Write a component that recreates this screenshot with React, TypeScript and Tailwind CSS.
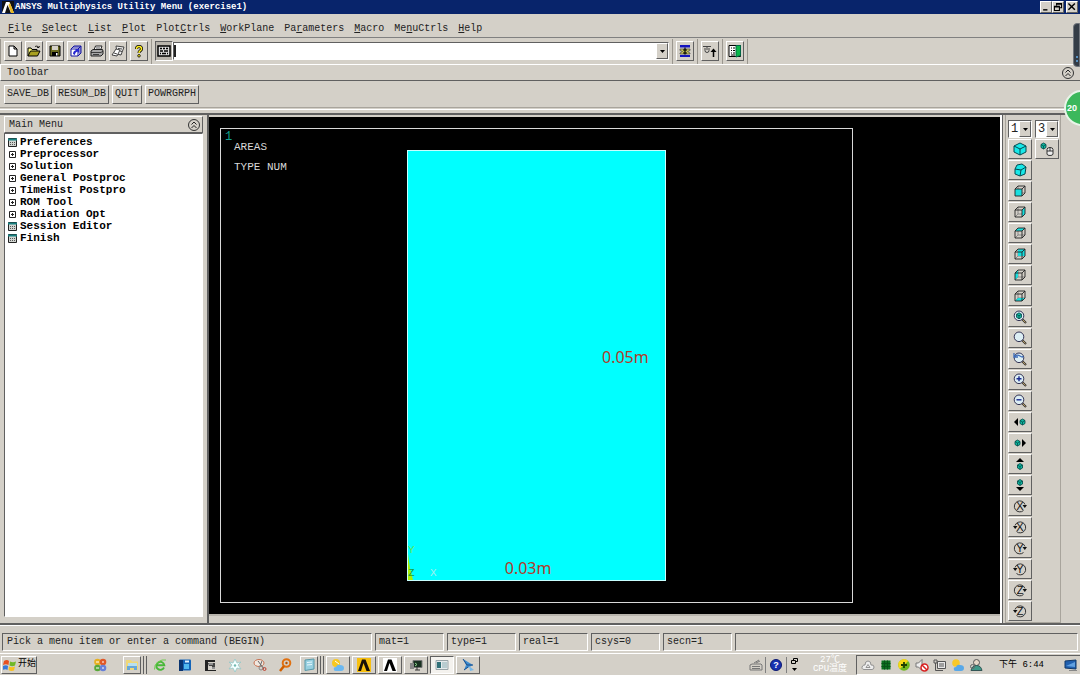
import React from "react";
import clsx from "clsx";

// Win2000-style bevels
const raised =
  "border border-t-white border-l-white border-r-[#606060] border-b-[#606060] bg-[#d4d0c8]";
const sunken =
  "border border-t-[#606060] border-l-[#606060] border-r-white border-b-white";

const menus = [
  { before: "", key: "F", after: "ile" },
  { before: "", key: "S", after: "elect" },
  { before: "", key: "L", after: "ist" },
  { before: "", key: "P", after: "lot" },
  { before: "Plot", key: "C", after: "trls" },
  { before: "", key: "W", after: "orkPlane" },
  { before: "Pa", key: "r", after: "ameters" },
  { before: "", key: "M", after: "acro" },
  { before: "Me", key: "n", after: "uCtrls" },
  { before: "", key: "H", after: "elp" },
];

const abbreviations = ["SAVE_DB", "RESUM_DB", "QUIT", "POWRGRPH"];

const tree = [
  { label: "Preferences", leaf: true },
  { label: "Preprocessor", leaf: false },
  { label: "Solution", leaf: false },
  { label: "General Postproc", leaf: false },
  { label: "TimeHist Postpro", leaf: false },
  { label: "ROM Tool", leaf: false },
  { label: "Radiation Opt", leaf: false },
  { label: "Session Editor", leaf: true },
  { label: "Finish", leaf: true },
];

const statusCells = ["mat=1", "type=1", "real=1", "csys=0", "secn=1"];

type SvgProps = { children: React.ReactNode; size?: string };

const Svg = ({ children, size = "size-3.5" }: SvgProps) => (
  <svg viewBox="0 0 14 14" className={clsx(size, "shrink-0")} fill="none" aria-hidden="true">
    {children}
  </svg>
);

const Collapse = () => (
  <Svg>
    <circle cx="7" cy="7" r="5.500" stroke="#333" />
    <path d="M4.500 6.500 7 4l2.500 2.500M4.500 10 7 7.500l2.500 2.500" stroke="#222" />
  </Svg>
);

const Arrow = () => (
  <svg viewBox="0 0 5 3" className="h-[3px] w-[5px]" aria-hidden="true">
    <path d="M0 0h5L2.500 3z" fill="#000" />
  </svg>
);

/* ---------- standard toolbar icons ---------- */

const fileIcons = [
  {
    label: "New Analysis",
    icon: (
      <path d="M3 2h5l3 3v7H3zM8 2v3h3" fill="#fff" stroke="#000" />
    ),
  },
  {
    label: "Open",
    icon: (
      <>
        <path d="M1 12V4h3l1 1.500h5V7" fill="#ffff80" stroke="#000" />
        <path d="M1 12l2.500-5H13l-2.500 5z" fill="#a8a020" stroke="#000" />
        <path d="M8 2.500q2-1.500 4 1l.5-1.500M12 3.500h-2" stroke="#000" strokeWidth=".8" />
      </>
    ),
  },
  {
    label: "Save",
    icon: (
      <>
        <path d="M2 2h10v10H2z" fill="#6b6b20" stroke="#000" />
        <path d="M4 2h6v4H4z" fill="#d4d0c8" />
        <path d="M4 8h6v4H4z" fill="#000" />
        <path d="M8 9h1.500v2.500H8z" fill="#fff" />
      </>
    ),
  },
  {
    label: "Pan Zoom Rotate",
    icon: (
      <>
        <path d="M2 5l3-3h7v7l-3 3H2z" fill="#fff" stroke="#1414a0" />
        <path d="M2 5h7v7M9 5l3-3M4 3h7M11 3v7" stroke="#1414a0" />
        <path d="M4 10q0-3 3-4L6 5h4v4L8.500 7.500Q6 8 6 11z" fill="#2626d0" />
      </>
    ),
  },
  {
    label: "Print",
    icon: (
      <>
        <path d="M4 6l1.500-4H12l-1.500 4" fill="#fff" stroke="#222" />
        <path d="M1 7l2-1.500h9.500L13 7v3l-2 2H1z" fill="#a8a8a8" stroke="#222" />
        <path d="M1 8.500h10l2-1.500M3 10.500h6M6 4h4" stroke="#222" strokeWidth=".8" />
      </>
    ),
  },
  {
    label: "Report Generator",
    icon: (
      <>
        <path d="M5 2l8 1-3 8-4-1z" fill="#eee" stroke="#333" strokeWidth=".9" />
        <path d="M1 11l4-6 4 1-3 6zM3 9l3 1M7 4.500l4 .5M9 7l2 .5" fill="#fff" stroke="#333" strokeWidth=".9" />
      </>
    ),
  },
  {
    label: "Help",
    icon: (
      <>
        <path d="M4.500 5q0-2.500 2.500-2.500T9.500 5Q9.500 6 8 7 7 7.500 7 9" stroke="#000" strokeWidth="3" />
        <path d="M4.500 5q0-2.500 2.500-2.500T9.500 5Q9.500 6 8 7 7 7.500 7 9" stroke="#ffee20" strokeWidth="1.500" />
        <circle cx="7" cy="11.800" r="1.300" fill="#ffee20" stroke="#000" strokeWidth=".8" />
      </>
    ),
  },
];

const commandIcons = [
  {
    label: "Raise Hidden",
    icon: (
      <>
        <path d="M2 1h10v2.500H2zM2 11h10v2H2z" fill="#1414c0" />
        <path d="M2 5h10v1.500L9.500 7.500 12 9v1H2V9l2.500-1.500L2 6.500z" fill="#c8c458" stroke="#444" strokeWidth=".7" />
        <path d="M7 3.500v7M5 6h4M5 9h4" stroke="#000" strokeWidth="1.200" />
      </>
    ),
  },
  {
    label: "Reset Picking",
    icon: (
      <>
        <path d="M0 2.500h8M2 4v2.500q0 2 2 2t2-2V4M4 3v3" stroke="#444" />
        <path d="M10.500 13V7" stroke="#000" strokeWidth="1.500" />
        <path d="M7.500 8l3-3.500 3 3.500z" fill="#000" />
      </>
    ),
  },
  {
    label: "Contact Manager",
    icon: (
      <>
        <path d="M1 1.500h11.500v11H1z" fill="#fff" stroke="#000" />
        <path d="M8 1.500h4.500v10L8 13z" fill="#08b848" stroke="#064" />
        <path d="M3 4h1M5 4h2M3 6.500h1M5 6.500h2M3 9h1M5 9h2M3 11h4" stroke="#000" />
      </>
    ),
  },
];

/* ---------- view toolbar icons ---------- */

const faces = {
  front: "M2 5h7v7H2z",
  right: "M9 5l3-3v7l-3 3z",
  top: "M2 5l3-3h7L9 5z",
  back: "M5 2h7v7H5z",
  left: "M2 5l3-3v7l-3 3z",
  bottom: "M2 12l3-3h7l-3 3z",
};

const Cube = ({ face }: { face: keyof typeof faces }) => (
  <Svg>
    <path d="M5 2v7h7M5 9l-3 3" stroke="#777" strokeWidth=".8" />
    <path d={faces[face]} fill="#18dede" />
    <path d="M2 5h7v7H2zM2 5l3-3h7L9 5M12 2v7l-3 3" stroke="#222" strokeWidth=".9" />
  </Svg>
);

const Magnifier = ({ children }: { children?: React.ReactNode }) => (
  <Svg>
    <path d="M9 9l4 4" stroke="#333" strokeWidth="2.200" />
    <path d="M9.500 9.500l3 3" stroke="#c8a868" strokeWidth=".9" />
    <circle cx="6" cy="5.800" r="4.800" fill="#dceef4" stroke="#335" />
    {children}
  </Svg>
);

const MiniCube = ({ x, y }: { x: number; y: number }) => (
  <g transform={`translate(${x} ${y})`}>
    <path d="M0 1.500L2.500 0 5 1.500v3L2.500 6 0 4.500z" fill="#10b8a0" stroke="#044" strokeWidth=".8" />
    <path d="M0 1.500L2.500 3 5 1.500M2.500 3v3" stroke="#044" strokeWidth=".7" />
  </g>
);

const Rotate = ({ axis, flip }: { axis: string; flip?: boolean }) => (
  <Svg>
    <g transform={flip ? "matrix(-1 0 0 1 14 0)" : undefined}>
      <path d="M10.500 11.500A5.500 5.500 0 1 1 12 5.500" stroke="#333" />
      <path d="M9.500 6H14l-2.200 3z" fill="#111" />
    </g>
    <text x="7" y="11" textAnchor="middle" fontSize="11" fontFamily="Liberation Sans, sans-serif" fill="#111">
      {axis}
    </text>
  </Svg>
);

const views = [
  {
    label: "Isometric View",
    icon: (
      <Svg>
        <path d="M7 1l6 3v6l-6 3-6-3V4z" fill="#18e8e8" stroke="#044a50" />
        <path d="M1 4l6 3 6-3M7 7v6" stroke="#044a50" />
      </Svg>
    ),
  },
  {
    label: "Oblique View",
    icon: (
      <Svg>
        <path d="M4 2l5-1 4 3-1 7-5 2-5-2V6z" fill="#18e8e8" stroke="#044a50" />
        <path d="M2 6l6 1 5-3M8 7l-1 6" stroke="#044a50" />
      </Svg>
    ),
  },
  { label: "Front View", icon: <Cube face="front" /> },
  { label: "Right View", icon: <Cube face="right" /> },
  { label: "Top View", icon: <Cube face="top" /> },
  { label: "Back View", icon: <Cube face="back" /> },
  { label: "Left View", icon: <Cube face="left" /> },
  { label: "Bottom View", icon: <Cube face="bottom" /> },
  {
    label: "Fit View",
    icon: (
      <Magnifier>
        <MiniCube x={3.5} y={2.8} />
      </Magnifier>
    ),
  },
  { label: "Zoom Model", icon: <Magnifier /> },
  {
    label: "Back Up",
    icon: (
      <Magnifier>
        <path d="M1 1v4h4M1.500 4.500Q4 2 7 4t3 0" stroke="#3c6cb8" strokeWidth="1.300" />
      </Magnifier>
    ),
  },
  {
    label: "Zoom In",
    icon: (
      <Magnifier>
        <path d="M3.500 5.800h5M6 3.300v5" stroke="#1a2a90" strokeWidth="1.400" />
      </Magnifier>
    ),
  },
  {
    label: "Zoom Out",
    icon: (
      <Magnifier>
        <path d="M3.500 5.800h5" stroke="#1a2a90" strokeWidth="1.400" />
      </Magnifier>
    ),
  },
  {
    label: "Pan Left",
    icon: (
      <Svg>
        <path d="M5 3v8L1 7z" fill="#000" />
        <MiniCube x={7} y={4} />
      </Svg>
    ),
  },
  {
    label: "Pan Right",
    icon: (
      <Svg>
        <path d="M9 3v8l4-4z" fill="#000" />
        <MiniCube x={2} y={4} />
      </Svg>
    ),
  },
  {
    label: "Pan Up",
    icon: (
      <Svg>
        <path d="M3 5h8L7 1z" fill="#000" />
        <MiniCube x={4.5} y={6.5} />
      </Svg>
    ),
  },
  {
    label: "Pan Down",
    icon: (
      <Svg>
        <path d="M3 9h8l-4 4z" fill="#000" />
        <MiniCube x={4.5} y={1.5} />
      </Svg>
    ),
  },
  { label: "Rotate +X", icon: <Rotate axis="X" /> },
  { label: "Rotate -X", icon: <Rotate axis="X" flip /> },
  { label: "Rotate +Y", icon: <Rotate axis="Y" /> },
  { label: "Rotate -Y", icon: <Rotate axis="Y" flip /> },
  { label: "Rotate +Z", icon: <Rotate axis="Z" /> },
  { label: "Rotate -Z", icon: <Rotate axis="Z" flip /> },
];

/* ---------- taskbar icons ---------- */

const quickLaunch = [
  {
    label: "Browser",
    icon: (
      <>
        <path d="M11 9.500a4 4 0 1 1 .3-2.300H4" stroke="#48b838" strokeWidth="1.900" />
        <path d="M1.500 11.500Q1 7 5 4t8-2" stroke="#70cc50" />
      </>
    ),
  },
  {
    label: "Reader",
    icon: (
      <>
        <rect x="1" y="1.500" width="12" height="11" rx="1" fill="#1464b8" />
        <path d="M1 2h4v11H1z" fill="#0a3470" />
        <path d="M6 6h5v5H6z" fill="#50b8f0" />
        <path d="M7 2.500h4v2H7z" fill="#e0f0ff" />
      </>
    ),
  },
  {
    label: "CAD",
    icon: (
      <>
        <path d="M2 2h10v2H5v8h8v1H2z" fill="#222" />
        <path d="M5 5h7v6H9V8H6z" fill="#444" />
        <path d="M6 6h4M7 10h5" stroke="#ddd" />
      </>
    ),
  },
  {
    label: "Flower",
    icon: (
      <>
        <path d="M7 1l2 4 4-1-3 3 3 4-4-1-2 4-2-4-4 1 3-4-3-3 4 1z" fill="#f4ffff" stroke="#8cc4c4" strokeWidth=".7" />
        <circle cx="7" cy="7.500" r="1.200" fill="#70b8b0" />
      </>
    ),
  },
  {
    label: "Snipping Tool",
    icon: (
      <>
        <ellipse cx="6" cy="5" rx="5" ry="3.500" fill="#f0e8e0" stroke="#c87050" />
        <path d="M5 3l6 8M9 3L7 8" stroke="#666" />
        <circle cx="8" cy="10" r="2" stroke="#888" />
        <circle cx="11.500" cy="11" r="1.500" stroke="#c04030" />
      </>
    ),
  },
  {
    label: "Everything",
    icon: (
      <>
        <circle cx="8.500" cy="5" r="3.800" stroke="#e07010" strokeWidth="2" />
        <path d="M6 8l-4 5" stroke="#d06000" strokeWidth="2.500" />
        <circle cx="8.500" cy="5" r="1.200" fill="#b05000" />
      </>
    ),
  },
];

const Lambda = ({ bg, fg }: { bg: string; fg: string }) => (
  <Svg>
    <path d="M0 0h14v14H0z" fill={bg} />
    <path d="M1 13L5 1.500h3.500L13 13H9.500L6.500 5 4 13z" fill={fg} />
  </Svg>
);

const windows = [
  {
    label: "Weather",
    icon: (
      <Svg>
        <circle cx="5" cy="5" r="4" fill="#f8c820" />
        <path d="M3 12q-1-3 2-3 1-3 4-2 4 0 4 3t-3 3H5q-2 0-2-1z" fill="#6cb8f0" />
        <path d="M4 3l4 3" stroke="#fff" />
      </Svg>
    ),
  },
  { label: "ANSYS Launcher", icon: <Lambda bg="#f8c010" fg="#181008" /> },
  { label: "ANSYS", icon: <Lambda bg="#fff" fg="#000" /> },
  {
    label: "Console",
    icon: (
      <Svg>
        <path d="M4 2.500h9v7H4z" fill="#183020" stroke="#777" />
        <path d="M1 5h4v6H1z" fill="#888" />
        <path d="M6 12h5M8 9v3" stroke="#333" />
        <path d="M6 5l2 1.500L6 8" stroke="#90d890" />
      </Svg>
    ),
  },
  {
    label: "ANSYS Output",
    active: true,
    icon: (
      <Svg>
        <path d="M1 2.500h12v9H1z" fill="#e4eaec" stroke="#98a4a8" />
        <path d="M2 4h4v6H2z" fill="#307078" />
        <path d="M7 4h5v6H7z" fill="#b8ccd0" />
      </Svg>
    ),
  },
  {
    label: "Mail",
    icon: (
      <Svg>
        <path d="M2 1l10 6-9 5 2-5z" fill="#3c8cd0" />
        <path d="M2 1l4 6 6 0M3 12l4-3" stroke="#1a4c88" />
        <path d="M8 8l5 4-4 1z" fill="#78b8e8" />
      </Svg>
    ),
  },
];

const trayIcons = [
  {
    label: "Cloud",
    icon: (
      <path d="M3 11.500Q0 11 1.500 8 3 6.500 4 7q0-4 3-4t3 4q3-.5 3 2t-2 2.500zM5 9.500l2-3 2 3z" fill="#eee" stroke="#888" strokeWidth=".9" />
    ),
  },
  {
    label: "CPU",
    icon: (
      <>
        <path d="M2.500 2.500h9v9h-9z" fill="#0c7020" />
        <path d="M2.500 5.500h9M2.500 8.500h9M5.500 2.500v9M8.500 2.500v9" stroke="#075418" />
      </>
    ),
  },
  {
    label: "Security",
    icon: (
      <>
        <circle cx="7" cy="7" r="5.800" fill="#70b820" />
        <path d="M1.200 7a5.800 5.800 0 0 1 10-4L7 7l-4.200 4A6 6 0 0 1 1.200 7z" fill="#f8d818" />
        <path d="M4 7h6M7 4v6" stroke="#204000" strokeWidth="1.800" />
      </>
    ),
  },
  {
    label: "Volume",
    icon: (
      <>
        <path d="M1 5h2.500L7 1.500v11L3.500 9H1z" fill="#eee" stroke="#777" />
        <circle cx="9.500" cy="9.500" r="3.500" fill="#fff" stroke="#d82020" strokeWidth="1.500" />
        <path d="M7 7l5 5" stroke="#d82020" strokeWidth="1.500" />
      </>
    ),
  },
  {
    label: "Network",
    icon: (
      <>
        <path d="M4.500 3.500h8v7h-8z" fill="#e8e8e8" stroke="#555" />
        <path d="M1 2h3v3H1zM2.500 5v7.500H10M6 6h5M6 8h5" stroke="#555" />
      </>
    ),
  },
  {
    label: "Weather",
    icon: (
      <>
        <circle cx="5" cy="5" r="3.800" fill="#f8c828" />
        <path d="M3 12q-1-3 2-3 1-3 4-2 4 0 4 3t-3 3H5q-2 0-2-1z" fill="#58a8e8" />
      </>
    ),
  },
  {
    label: "Contacts",
    icon: (
      <>
        <circle cx="7.500" cy="4.500" r="3" fill="#e8d8c8" stroke="#555" />
        <path d="M2 12.500q1-5 5.500-5T13 12.500z" fill="#409888" stroke="#355" />
        <circle cx="3.500" cy="8.500" r="2" stroke="#666" />
      </>
    ),
  },
];

const TitleBar = () => (
  <header className="flex h-3.5 items-center bg-[#08246b] pl-0.5 text-white">
    <svg viewBox="0 0 12 12" className="size-3 shrink-0" aria-hidden="true">
      <path d="M0 0h12v12H0z" fill="#111" />
      <path d="M0 12L4 1h3.500L12 12H9L5.500 4 3 12z" fill="#fff" />
      <path d="M6.500 4L9 12h3L8 2z" fill="#e8b820" />
    </svg>
    <h1 className="ml-px text-[9px] leading-3 font-bold">ANSYS Multiphysics Utility Menu (exercise1)</h1>
    <div className="ml-auto flex h-3 pr-0.5">
      <button aria-label="Minimize" className={clsx(raised, "flex w-3 items-center justify-center")}>
        <Svg size="size-2.5">
          <path d="M3 11h6" stroke="#000" strokeWidth="2" />
        </Svg>
      </button>
      <button aria-label="Restore" className={clsx(raised, "flex w-3 items-center justify-center")}>
        <Svg size="size-2.5">
          <path d="M5 5V2h7v6H9M2 6h7v6H2zM2 7h7M5 3h7" stroke="#000" strokeWidth="1.500" />
        </Svg>
      </button>
      <button aria-label="Close" className={clsx(raised, "ml-0.5 flex w-3 items-center justify-center")}>
        <Svg size="size-2.5">
          <path d="M2 2l9 9M11 2l-9 9" stroke="#000" strokeWidth="2" />
        </Svg>
      </button>
    </div>
  </header>
);

const toolGroup = "flex h-[25px] items-center gap-[3px] border-r border-[#9a968e] px-[3px]";
const toolButton = "flex h-5 w-[18px] items-center justify-center";

const StandardToolbar = () => (
  <div className="flex h-[26px] items-center">
    <div className={clsx(toolGroup, "border-l")}>
      {fileIcons.map((ele) => (
        <button key={ele.label} aria-label={ele.label} className={clsx(raised, toolButton)}>
          <Svg>{ele.icon}</Svg>
        </button>
      ))}
    </div>
    <div className="flex h-[25px] w-[521px] items-center border-r border-[#9a968e] px-[3px]">
      <button aria-label="Keyboard Entry" className={clsx(sunken, "flex h-5 w-[18px] items-center justify-center bg-[#b8b4ac]")}>
        <Svg>
          <path d="M1 2h12v10H1z" fill="#ddd" stroke="#000" strokeWidth="1.500" />
          <path d="M3 4.500h2M6 4.500h2M9 4.500h2M3 7h3M7 7h4M3 9.500h1M5 9.500h4M10 9.500h1" stroke="#000" strokeWidth="1.300" />
        </Svg>
      </button>
      <div className={clsx(sunken, "flex h-[18px] flex-1 bg-white")}>
        <input aria-label="Command" className="my-0.5 min-w-0 flex-1 border-l-2 border-[#222] outline-none" />
        <button aria-label="Command history" className={clsx(raised, "flex w-3 items-center justify-center")}>
          <Arrow />
        </button>
      </div>
    </div>
    {commandIcons.map((ele) => (
      <div key={ele.label} className={toolGroup}>
        <button aria-label={ele.label} className={clsx(raised, toolButton)}>
          <Svg>{ele.icon}</Svg>
        </button>
      </div>
    ))}
  </div>
);

const MainMenu = () => (
  <aside className="flex w-[207px] shrink-0 flex-col px-1 pt-px pb-1.5">
    <div className={clsx(raised, "flex h-[17px] items-center justify-between pr-px pl-1")}>
      <h2>Main Menu</h2>
      <button aria-label="Collapse main menu">
        <Collapse />
      </button>
    </div>
    <ul className={clsx(sunken, "flex-1 bg-white pt-0.5 pl-[3px] text-[11px] font-bold text-black")}>
      {tree.map((ele) => (
        <li key={ele.label}>
          <button className="flex h-3 items-center gap-[3px] leading-3">
            {ele.leaf ? (
              <svg viewBox="0 0 9 9" className="size-[9px]" aria-hidden="true">
                <path d="M.5.5h8v8h-8z" fill="#d0d4d0" stroke="#222" />
                <path d="M0 .5h9v2H0z" fill="#188080" />
                <path d="M2 4.500h5M2 6.500h5" stroke="#555" strokeDasharray="1 1" />
              </svg>
            ) : (
              <svg viewBox="0 0 9 9" className="size-[9px]" aria-hidden="true">
                <path d="M1.500 1.500h6v6h-6zM3 4.500h3M4.500 3v3" fill="#fff" stroke="#222" />
              </svg>
            )}
            {ele.label}
          </button>
        </li>
      ))}
    </ul>
  </aside>
);

// Area plot, positioned relative to the black graphics window
const Graphics = () => (
  <main className="flex min-w-0 flex-1 flex-col border-x-2 border-l-[#606060] border-r-white pt-0.5 pb-[7px]">
    <div className="relative flex-1 border-b-2 border-[#b8b4ac] bg-black text-white">
      <div className="absolute top-[11px] bottom-[11px] left-[11px] w-4/5 border border-[#d8d8d8]" />
      <span className="absolute top-3.5 left-4 text-[12px] text-[#10a090]">1</span>
      <div className="absolute top-5 left-[25px] text-[11px] leading-5 text-[#d8d8d8]">
        <p>AREAS</p>
        <p>TYPE NUM</p>
      </div>
      <div className="absolute top-[33px] bottom-[33px] left-1/4 w-[259px] border border-[#c8ffff] bg-[#00ffff] font-['Noto_Sans',sans-serif] text-[16px] leading-5 text-[#b03c2c]">
        <span className="absolute top-[196px] right-4">0.05m</span>
        <span className="absolute bottom-0.5 left-[97px]">0.03m</span>
        <svg viewBox="0 0 30 36" className="absolute bottom-0 left-0 h-9 w-[30px]" aria-hidden="true">
          <path d="M0 10l2 14 3 12H0z" fill="#a8f000" />
          <g fontSize="11" fontFamily="Liberation Mono, monospace">
            <text x="0" y="9" fill="#60e850">Y</text>
            <text x="0" y="32" fill="#18a040">Z</text>
            <text x="22" y="32" fill="#a0f0f0">X</text>
          </g>
        </svg>
      </div>
    </div>
  </main>
);

const NumberSelect = ({ label, value }: { label: string; value: string }) => (
  <div className={clsx(sunken, "relative flex h-[18px] w-6 bg-white")}>
    <select aria-label={label} defaultValue={value} className="w-full appearance-none pl-0.5 text-[12px] leading-4 text-[#222] outline-none">
      {["1", "2", "3", "4", "5"].map((n) => (
        <option key={n}>{n}</option>
      ))}
    </select>
    <span className={clsx(raised, "pointer-events-none absolute inset-y-0 right-0 flex w-3 items-center justify-center")}>
      <Arrow />
    </span>
  </div>
);

const ViewToolbar = () => (
  <aside className="w-[78px] shrink-0 border-l border-[#606060] pl-0.5">
    <div className="flex w-14 gap-[3px] border-r border-b border-l border-[#a8a49c] pt-[5px] pb-px pl-0.5">
      <div className="flex flex-col gap-px">
        <NumberSelect label="Window" value="1" />
        {views.map((ele) => (
          <button key={ele.label} aria-label={ele.label} className={clsx(raised, "flex h-5 w-6 items-center justify-center")}>
            {ele.icon}
          </button>
        ))}
      </div>
      <div className="flex flex-col gap-px">
        <NumberSelect label="Rotation step" value="3" />
        <button aria-label="Dynamic Model Mode" className={clsx(raised, "flex h-5 w-6 items-center justify-center")}>
          <Svg>
            <MiniCube x={1} y={1} />
            <path d="M7 7.500q0-2 3-2t3 2V12q0 1.500-3 1.500T7 12zM7 9h6M10 5.500V9" fill="#eee" stroke="#222" strokeWidth=".9" />
          </Svg>
        </button>
      </div>
    </div>
  </aside>
);

const StatusBar = () => (
  <div className="flex h-7 gap-[3px] border-t border-white px-0.5 pt-[7px] text-[#222]">
    <p className={clsx(sunken, "h-[18px] w-[370px] pl-1 leading-4")}>
      Pick a menu item or enter a command (BEGIN)
    </p>
    {statusCells.map((cell) => (
      <p key={cell} className={clsx(sunken, "h-[18px] w-[69px] pl-[3px] leading-4")}>
        {cell}
      </p>
    ))}
    <p className={clsx(sunken, "h-[18px] flex-1")} />
  </div>
);

const taskButton = "flex h-[18px] w-6 items-center justify-center";

const TaskBar = () => (
  <footer className="flex h-[22px] items-center border-t border-white pl-px font-['Liberation_Mono','Noto_Sans_CJK_SC',monospace] text-[9px] leading-[9px]">
    <button className={clsx(raised, "flex h-[18px] w-9 items-center gap-px pl-px text-black")}>
      <Svg>
        <path d="M1 3q3-2 5 0L5.500 7Q3 5.500 0 7z" fill="#e85020" />
        <path d="M7 3.500q3 1.500 6 0L12 7.500q-3 1.500-5.500 0z" fill="#70b828" />
        <path d="M0 8q3-1.500 5 0l-.5 4q-2-1.500-5 0z" fill="#3878d8" />
        <path d="M6 8.500q3 1.500 6 0l-1 4q-3 1-5.500-.5z" fill="#f8c020" />
      </Svg>
      <span className="whitespace-nowrap">开始</span>
    </button>
    <button aria-label="Office" className="ml-14">
      <Svg>
        <circle cx="4.500" cy="4" r="3.300" fill="#e8b020" />
        <circle cx="10" cy="4" r="3.300" fill="#e05828" />
        <circle cx="4.500" cy="10" r="3.300" fill="#58a838" />
        <circle cx="10" cy="10" r="3.300" fill="#6880d8" />
        <path d="M3 4h3M9 4h2M3 10h3M9 10h2" stroke="#fff" />
      </Svg>
    </button>
    <button aria-label="Explorer" className={clsx(raised, "ml-4 flex h-[18px] w-[18px] items-center justify-center")}>
      <Svg>
        <path d="M1 2h5l1 1.500h6V12H1z" fill="#f0d878" />
        <path d="M3 5h9v4H3z" fill="#b8e0f0" />
        <path d="M2 12V8h10v4H9V10H5v2z" fill="#68a8d8" />
      </Svg>
    </button>
    <span className="h-[18px] w-[3px] border-r border-[#606060]" />
    <span className="h-[18px] w-[3px] border-r border-[#606060]" />
    <div className="ml-1.5 flex gap-[11px]">
      {quickLaunch.map((ele) => (
        <button key={ele.label} aria-label={ele.label}>
          <Svg>{ele.icon}</Svg>
        </button>
      ))}
    </div>
    <button aria-label="Notepad" className={clsx(raised, "ml-2 flex h-[18px] w-[18px] items-center justify-center")}>
      <Svg>
        <path d="M3 2l9-1v10l-9 1.500z" fill="#98d0e0" stroke="#5898a8" />
        <path d="M5 4.500l5-.5M5 7l5-.5" stroke="#e8f8ff" />
      </Svg>
    </button>
    <span className="h-[18px] w-[3px] border-r border-[#606060]" />
    <span className="h-[18px] w-[3px] border-r border-[#606060]" />
    <div className="ml-0.5 flex gap-0.5">
      {windows.map((ele) => (
        <button key={ele.label} aria-label={ele.label} className={clsx(taskButton, ele.active ? "border border-t-[#606060] border-l-[#606060] border-r-white border-b-white bg-[#f4f2ee]" : raised)}>
          {ele.icon}
        </button>
      ))}
    </div>

    <div className="ml-auto flex items-center">
      <button aria-label="Keyboard layout" className="mr-0.5">
        <Svg>
          <path d="M1 7l2-1h9l1 1v5H1zM3 8.500h8M3 10.500h8M5 5l5-3M7 5l4-2" stroke="#777" />
        </Svg>
      </button>
      <span className="h-4 border-l border-[#808080]" />
      <button aria-label="Help" className="mx-1">
        <svg viewBox="0 0 12 12" className="size-3" aria-hidden="true">
          <circle cx="6" cy="6" r="5.500" fill="#1830b0" stroke="#0c1870" />
          <text x="6" y="9.300" textAnchor="middle" fontSize="9" fontWeight="bold" fontFamily="Liberation Sans, sans-serif" fill="#fff">
            ?
          </text>
        </svg>
      </button>
      <span className="h-4 border-l border-[#808080]" />
      <button aria-label="Language bar options" className="ml-1 flex flex-col items-center gap-1">
        <svg viewBox="0 0 7 6" className="h-1.5 w-[7px]" fill="none" aria-hidden="true">
          <path d="M2.500 2V.5h4v3H5M.5 2.500h4v3h-4z" stroke="#000" />
        </svg>
        <Arrow />
      </button>
      <p className="ml-3.5 w-9 text-center text-white">
        27℃
        <br />
        CPU温度
      </p>
      <div className={clsx(sunken, "ml-2 flex h-5 w-56 items-center gap-1 border-r-0 pr-0.5 pl-1")}>
        {trayIcons.map((ele) => (
          <button key={ele.label} aria-label={ele.label}>
            <Svg>{ele.icon}</Svg>
          </button>
        ))}
        <time className="ml-auto text-[9px] leading-3 whitespace-nowrap text-black">下午 6:44</time>
        <button aria-label="Show desktop" className="ml-4">
          <Svg>
            <path d="M1 3l11-1v9L1 10z" fill="#2060b0" stroke="#103868" />
            <path d="M2 8l9-4v5z" fill="#60a0e0" />
            <path d="M5 12.500h8" stroke="#888" />
          </Svg>
        </button>
      </div>
    </div>
  </footer>
);

const App = () => {
  return (
    <div className="relative flex min-h-screen flex-col overflow-hidden bg-[#d4d0c8] font-['Liberation_Mono',monospace] text-[10px] leading-3 text-[#222]">
      <TitleBar />
      <nav className="flex h-6 items-center gap-2.5 border-b border-[#808080] pt-1.5 pl-2">
        {menus.map((ele) => (
          <button key={ele.before + ele.key + ele.after}>
            {ele.before}
            <u>{ele.key}</u>
            {ele.after}
          </button>
        ))}
      </nav>
      <StandardToolbar />
      <div className="flex h-[17px] items-center justify-between border-t border-b border-l border-t-white border-b-[#606060] border-l-white pr-[5px] pl-1.5">
        <h2>Toolbar</h2>
        <button aria-label="Collapse toolbar">
          <Collapse />
        </button>
      </div>
      <div className="flex h-[27px] items-center gap-[3px] border-b border-[#a8a49c] pl-1">
        {abbreviations.map((label) => (
          <button key={label} className={clsx(raised, "h-[19px] px-0.5")}>
            {label}
          </button>
        ))}
      </div>
      <div className="mt-px flex flex-1 flex-col border-t border-white pt-[3px]">
        <div className="flex flex-1 border-t-2 border-b-2 border-[#606060]">
          <MainMenu />
          <Graphics />
          <ViewToolbar />
        </div>
      </div>
      <StatusBar />
      <TaskBar />

      {/* floating desktop widgets docked at the right edge */}
      <div className="absolute top-[23px] right-0 flex h-11 w-[7px] flex-col items-center justify-end rounded-l-sm border border-[#70757c] bg-[#343c46] pb-1">
        <span className="h-1.5 border-l-2 border-dotted border-[#5890c0]" />
      </div>
      <div className="absolute top-[90px] -right-5 flex size-9 items-center rounded-full border-2 border-[#e8f4e8] bg-[#3cb85c] pl-px font-['Liberation_Sans',sans-serif] text-[9px] font-bold text-white">
        20
      </div>
    </div>
  );
};

export default App;
